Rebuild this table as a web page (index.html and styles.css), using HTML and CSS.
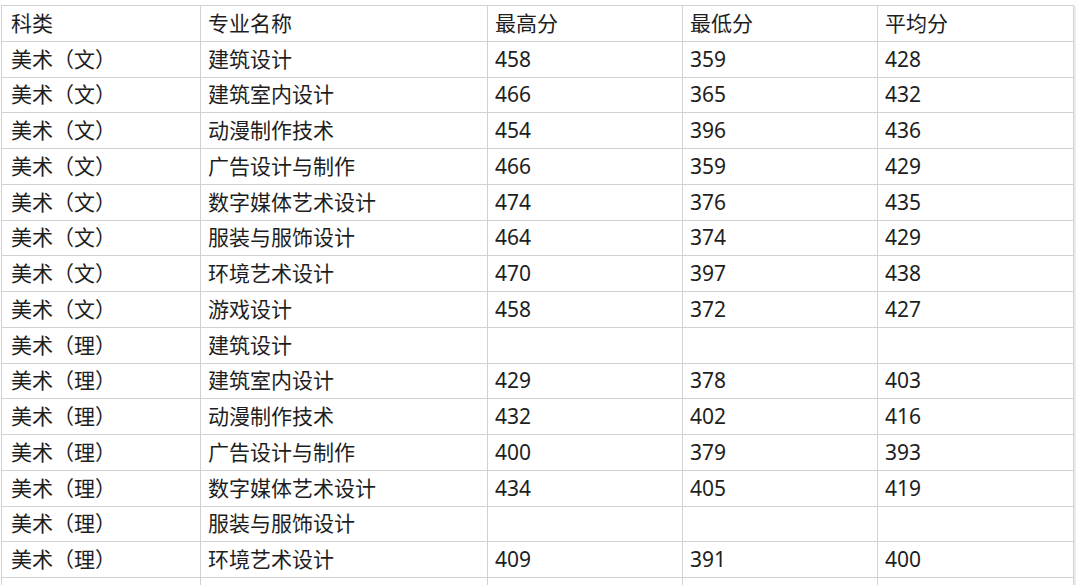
FILE: index.html
```html
<!DOCTYPE html>
<html lang="zh-CN">
<head>
<meta charset="utf-8">
<title>美术专业分数</title>
<link rel="stylesheet" href="styles.css">
</head>
<body>
<div class="sheet">
  <div class="cell">科类</div><div class="cell">专业名称</div><div class="cell">最高分</div><div class="cell">最低分</div><div class="cell">平均分</div>
  <div class="cell">美术（文）</div><div class="cell">建筑设计</div><div class="cell">458</div><div class="cell">359</div><div class="cell">428</div>
  <div class="cell">美术（文）</div><div class="cell">建筑室内设计</div><div class="cell">466</div><div class="cell">365</div><div class="cell">432</div>
  <div class="cell">美术（文）</div><div class="cell">动漫制作技术</div><div class="cell">454</div><div class="cell">396</div><div class="cell">436</div>
  <div class="cell">美术（文）</div><div class="cell">广告设计与制作</div><div class="cell">466</div><div class="cell">359</div><div class="cell">429</div>
  <div class="cell">美术（文）</div><div class="cell">数字媒体艺术设计</div><div class="cell">474</div><div class="cell">376</div><div class="cell">435</div>
  <div class="cell">美术（文）</div><div class="cell">服装与服饰设计</div><div class="cell">464</div><div class="cell">374</div><div class="cell">429</div>
  <div class="cell">美术（文）</div><div class="cell">环境艺术设计</div><div class="cell">470</div><div class="cell">397</div><div class="cell">438</div>
  <div class="cell">美术（文）</div><div class="cell">游戏设计</div><div class="cell">458</div><div class="cell">372</div><div class="cell">427</div>
  <div class="cell">美术（理）</div><div class="cell">建筑设计</div><div class="cell"></div><div class="cell"></div><div class="cell"></div>
  <div class="cell">美术（理）</div><div class="cell">建筑室内设计</div><div class="cell">429</div><div class="cell">378</div><div class="cell">403</div>
  <div class="cell">美术（理）</div><div class="cell">动漫制作技术</div><div class="cell">432</div><div class="cell">402</div><div class="cell">416</div>
  <div class="cell">美术（理）</div><div class="cell">广告设计与制作</div><div class="cell">400</div><div class="cell">379</div><div class="cell">393</div>
  <div class="cell">美术（理）</div><div class="cell">数字媒体艺术设计</div><div class="cell">434</div><div class="cell">405</div><div class="cell">419</div>
  <div class="cell">美术（理）</div><div class="cell">服装与服饰设计</div><div class="cell"></div><div class="cell"></div><div class="cell"></div>
  <div class="cell">美术（理）</div><div class="cell">环境艺术设计</div><div class="cell">409</div><div class="cell">391</div><div class="cell">400</div>
  <div class="cell"></div><div class="cell"></div><div class="cell"></div><div class="cell"></div><div class="cell"></div>
</div>
</body>
</html>
```

FILE: styles.css
```css
html, body {
  margin: 0;
  padding: 0;
  background: #ffffff;
  overflow: hidden;
}

body {
  padding: 5px 0 0 1px;
  font-family: "Noto Sans", "Noto Sans CJK SC", sans-serif;
  color: #1e1e1e;
}

.sheet {
  display: grid;
  grid-template-columns: 199px 287px 195px 195px 196px;
  grid-auto-rows: 35.75px;
  width: max-content;
  border-top: 1px solid #d2d2d2;
  border-left: 1px solid #d2d2d2;
  box-shadow: 3px 0 0 -1px #ececec;
}

.cell {
  border-right: 1px solid #d2d2d2;
  border-bottom: 1px solid #d2d2d2;
  display: flex;
  align-items: center;
  padding-left: 7px;
  font-size: 21px;
  line-height: 1;
  white-space: nowrap;
}

.cell:nth-child(5n+1) {
  padding-left: 9px;
}
```
